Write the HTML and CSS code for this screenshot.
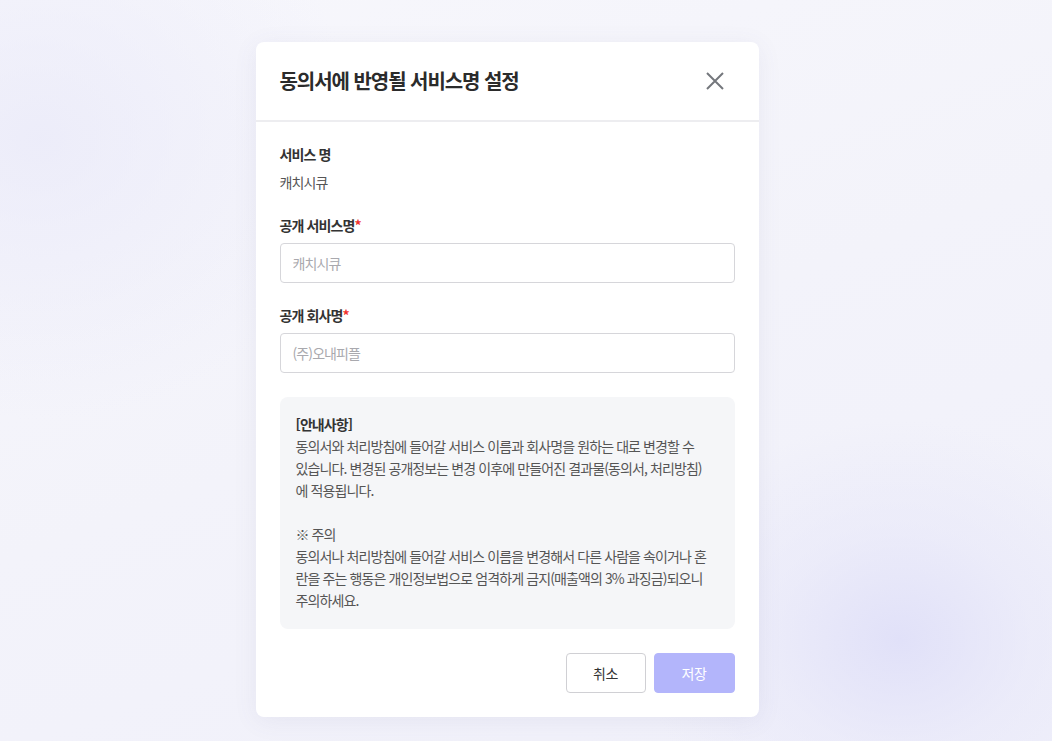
FILE: index.html
```html
<!DOCTYPE html>
<html lang="ko">
<head>
    <meta charset="UTF-8">
    <meta name="viewport" content="width=device-width">
    <title>서비스명 설정</title>
    <link rel="stylesheet" href="styles.css">
</head>
<body>
    <div class="modal">
        <header class="modal-header">
            <h1>동의서에 반영될 서비스명 설정</h1>
            <button class="close" type="button" aria-label="닫기">
                <svg width="20" height="20" viewBox="0 0 20 20">
                    <path d="M2 2 L18 18 M18 2 L2 18" stroke="#74777c" stroke-width="2" fill="none"/>
                </svg>
            </button>
        </header>

        <main class="modal-body">
            <div class="label">서비스 명</div>
            <div class="value">캐치시큐</div>

            <label class="label field-label" for="serviceName">공개 서비스명<span class="req">*</span></label>
            <input type="text" id="serviceName" placeholder="캐치시큐">

            <label class="label field-label" for="companyName">공개 회사명<span class="req">*</span></label>
            <input type="text" id="companyName" placeholder="(주)오내피플">

            <div class="notice">
                <strong>[안내사항]</strong><br>
                동의서와 처리방침에 들어갈 서비스 이름과 회사명을 원하는 대로 변경할 수<br>
                있습니다. 변경된 공개정보는 변경 이후에 만들어진 결과물(동의서, 처리방침)<br>
                에 적용됩니다.<br>
                <br>
                ※ 주의<br>
                동의서나 처리방침에 들어갈 서비스 이름을 변경해서 다른 사람을 속이거나 혼<br>
                란을 주는 행동은 개인정보법으로 엄격하게 금지(매출액의 3% 과징금)되오니<br>
                주의하세요.
            </div>

            <div class="actions">
                <button type="button" class="btn btn-cancel">취소</button>
                <button type="button" class="btn btn-save">저장</button>
            </div>
        </main>
    </div>
</body>
</html>
```

FILE: styles.css
```css
body {
    margin: 0;
    min-height: 741px;
    font-family: "Noto Sans CJK KR", "Noto Sans", sans-serif;
    letter-spacing: -0.9px;
    color: #333;
    display: flex;
    justify-content: center;
    align-items: flex-start;
    padding: 42px 38px 0 0;
    box-sizing: border-box;
    background:
        radial-gradient(ellipse 260px 220px at 900px 640px, rgba(222, 222, 248, 0.85) 0, rgba(230, 230, 249, 0.5) 50%, rgba(240, 240, 251, 0) 100%),
        radial-gradient(ellipse 320px 280px at 40px 140px, rgba(234, 234, 249, 0.8) 0, rgba(240, 240, 250, 0) 100%),
        linear-gradient(160deg, #f7f7fc 0%, #f3f3fa 50%, #f0f0fa 100%);
}

.modal {
    width: 503px;
    background-color: #fff;
    border-radius: 8px;
    box-shadow: 0 4px 24px rgba(90, 90, 140, 0.08);
}

.modal-header {
    height: 78px;
    padding: 0 24px;
    display: flex;
    align-items: center;
    justify-content: space-between;
    border-bottom: 2px solid #ededf0;
}

.modal-header h1 {
    margin: 0;
    font-size: 20px;
    line-height: 28px;
    font-weight: 700;
    color: #2b2b2b;
    letter-spacing: -1.05px;
}

.close {
    width: 40px;
    height: 40px;
    border: none;
    background: none;
    padding: 0;
    display: flex;
    align-items: center;
    justify-content: center;
    cursor: pointer;
}

.modal-body {
    padding: 22px 24px 24px;
    display: flex;
    flex-direction: column;
}

.label {
    display: block;
    font-size: 14px;
    line-height: 20px;
    font-weight: 700;
    color: #333;
}

.value {
    margin-top: 8px;
    font-size: 14px;
    line-height: 20px;
    color: #555;
}

.field-label {
    margin-top: 23px;
    margin-bottom: 8px;
}

input + .field-label {
    margin-top: 22px;
}

.req {
    color: #f0322d;
}

input {
    height: 40px;
    box-sizing: border-box;
    border: 1px solid #d6d6da;
    border-radius: 4px;
    padding: 0 12px;
    font-family: inherit;
    font-size: 14px;
    letter-spacing: -0.9px;
    color: #333;
    outline: none;
}

input::placeholder {
    color: #a9a9ae;
}

.notice {
    margin-top: 24px;
    background-color: #f5f6f8;
    border-radius: 8px;
    padding: 16px 16px 18px;
    font-size: 14px;
    line-height: 22px;
    color: #555;
    white-space: nowrap;
}

.notice strong {
    color: #333;
    font-weight: 700;
}

.actions {
    margin-top: 24px;
    display: flex;
    justify-content: flex-end;
    gap: 8px;
}

.btn {
    width: 80px;
    height: 40px;
    border-radius: 4px;
    font-family: inherit;
    font-size: 14px;
    letter-spacing: -0.5px;
    cursor: pointer;
}

.btn-cancel {
    background-color: #fff;
    border: 1px solid #d0d0d4;
    color: #333;
}

.btn-save {
    width: 81px;
    background-color: #b3b5fb;
    border: 1px solid #b3b5fb;
    color: #fff;
}
```
